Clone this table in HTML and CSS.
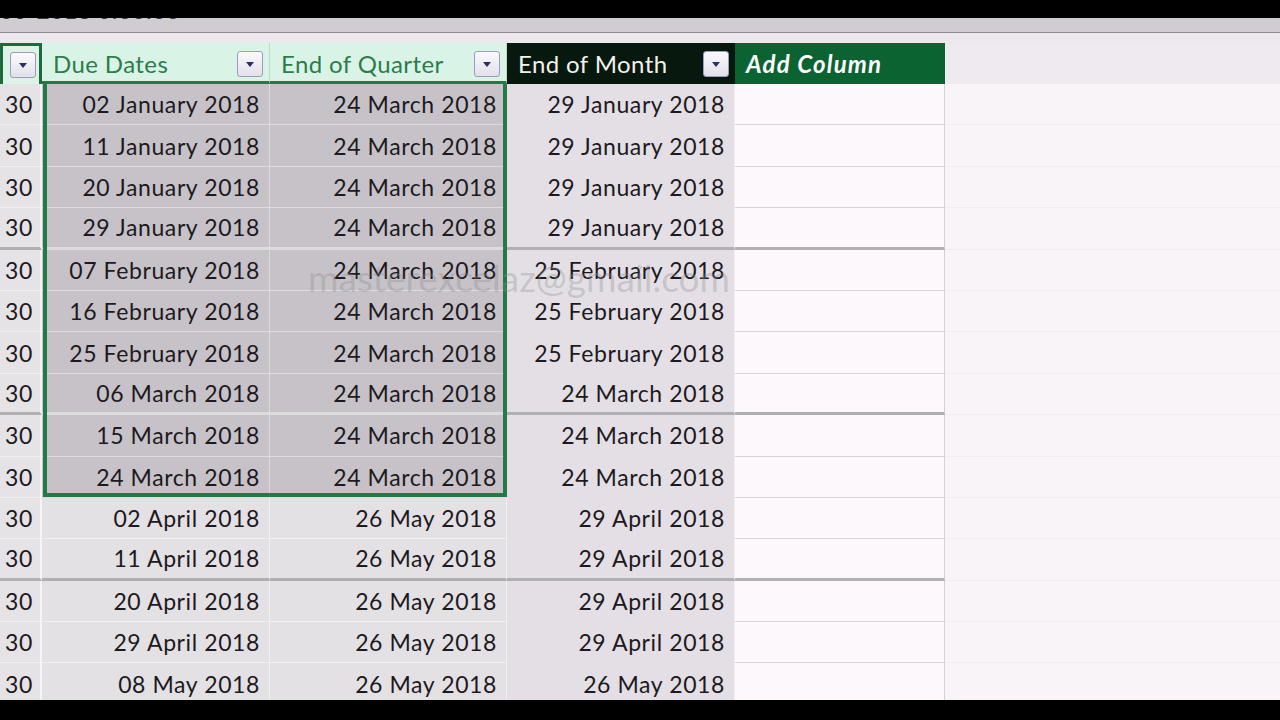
FILE: index.html
```html
<!DOCTYPE html>
<html>
    <head>
        <title>Due Dates</title>
        <link rel="stylesheet" href="styles.css">
    </head>
    <body>
        <div class="topbar"></div>
        <div class="screen">
            <div class="formula"><span class="formula-text">03-2018 0:00:00</span></div>
            <div class="gap"></div>
            <div class="sheet">
                <div class="row head">
                    <div class="hcell first"><span class="drop"></span></div>
                    <div class="hcell mint">Due Dates<span class="drop"></span></div>
                    <div class="hcell mint">End of Quarter<span class="drop"></span></div>
                    <div class="hcell dark">End of Month<span class="drop"></span></div>
                    <div class="hcell add">Add Column</div>
                    <div class="hcell rest"></div>
                </div>
                <div id="rows"></div>
                <div class="selection"></div>
                <div class="watermark">masterexcelaz@gmail.com</div>
            </div>
        </div>
        <div class="bottombar"></div>

        <script>
            var data = [
                ["02 January 2018", "24 March 2018", "29 January 2018"],
                ["11 January 2018", "24 March 2018", "29 January 2018"],
                ["20 January 2018", "24 March 2018", "29 January 2018"],
                ["29 January 2018", "24 March 2018", "29 January 2018"],
                ["07 February 2018", "24 March 2018", "25 February 2018"],
                ["16 February 2018", "24 March 2018", "25 February 2018"],
                ["25 February 2018", "24 March 2018", "25 February 2018"],
                ["06 March 2018", "24 March 2018", "24 March 2018"],
                ["15 March 2018", "24 March 2018", "24 March 2018"],
                ["24 March 2018", "24 March 2018", "24 March 2018"],
                ["02 April 2018", "26 May 2018", "29 April 2018"],
                ["11 April 2018", "26 May 2018", "29 April 2018"],
                ["20 April 2018", "26 May 2018", "29 April 2018"],
                ["29 April 2018", "26 May 2018", "29 April 2018"],
                ["08 May 2018", "26 May 2018", "26 May 2018"]
            ];

            function show() {
                var html = "";
                for (var i = 0; i < data.length; i++) {
                    var cls = "row";
                    if (i < 10) cls += " picked";
                    if (i == 3 || i == 7 || i == 11) cls += " split";
                    html += '<div class="' + cls + '">' +
                        '<div class="cell num">30</div>' +
                        '<div class="cell date">' + data[i][0] + '</div>' +
                        '<div class="cell date">' + data[i][1] + '</div>' +
                        '<div class="cell month">' + data[i][2] + '</div>' +
                        '<div class="cell blank"></div>' +
                        '<div class="cell rest"></div>' +
                        '</div>';
                }
                document.getElementById("rows").innerHTML = html;
            }

            show();
        </script>
    </body>
</html>
```

FILE: styles.css
```css
body {
    margin: 0;
    background-color: #000;
    font-family: Lato, "Open Sans", sans-serif;
    color: #1c1a1e;
}
.topbar {
    height: 18px;
    background-color: #000;
}
.bottombar {
    height: 20px;
    background-color: #000;
}
.screen {
    height: 682px;
    overflow: hidden;
    background-color: #f8f4f8;
}
.formula {
    height: 14px;
    overflow: hidden;
    background-color: #d0ccd1;
    border-bottom: 1px solid #8d8b8f;
}
.formula-text {
    display: block;
    margin-top: -19px;
    font-size: 22px;
    line-height: 24px;
    font-weight: bold;
    color: #3a383c;
    letter-spacing: 1px;
}
.gap {
    height: 10px;
    background-color: #ece8ed;
}
.sheet {
    position: relative;
}
.row {
    display: grid;
    grid-template-columns: 42px 228px 237px 228px 210px 1fr;
    height: 41.4px;
}
.head {
    height: 41px;
}
.hcell {
    display: flex;
    align-items: center;
    padding-left: 11px;
    font-size: 24px;
    letter-spacing: 0.4px;
    box-sizing: border-box;
}
.hcell.first {
    background-color: #dcf3e7;
    border: 3px solid #1c6b3b;
    border-bottom-width: 0;
    padding-left: 7px;
}
.mint {
    background-color: #d9f4e6;
    color: #2c7c4c;
    border-right: 1px solid #b9dcc6;
    border-bottom: 3px solid #237a46;
    padding-top: 3px;
}
.dark {
    background-color: #07180f;
    color: #f2f2ea;
}
.add {
    background-color: #0b6331;
    color: #fff;
    font-weight: bold;
    font-style: italic;
    letter-spacing: 1.2px;
}
.hcell.rest {
    background-color: #efeaf0;
}
.drop {
    width: 24px;
    height: 24px;
    margin-left: auto;
    margin-right: 6px;
    border: 1px solid #9d9bbd;
    border-radius: 3px;
    background: linear-gradient(#fafafd, #e2e0ea);
    position: relative;
}
.first .drop {
    margin: 0;
}
.drop::after {
    content: "";
    position: absolute;
    left: 8px;
    top: 10px;
    border-left: 4px solid transparent;
    border-right: 4px solid transparent;
    border-top: 5px solid #2a2d66;
}
.cell {
    display: flex;
    align-items: center;
    justify-content: flex-end;
    padding-right: 9px;
    font-size: 23px;
    letter-spacing: 0.6px;
    box-sizing: border-box;
    border-bottom: 1px solid #f2eff3;
    border-right: 1px solid #f2eff3;
}
.cell.num {
    justify-content: flex-start;
    padding-left: 5px;
    background-color: #e6e3e7;
    border-right: 2px solid #f5f3f6;
}
.cell.date {
    background-color: #e4e1e5;
    color: #1c1a1e;
}
.picked .cell.date {
    background-color: #c6c2c7;
    border-color: #dedbdf;
}
.cell.month {
    background-color: #e3dfe4;
    border-bottom-color: #e3dfe4;
}
.cell.blank {
    background-color: #fcf8fc;
    border-bottom: 1px solid #d9d5da;
    border-right: 1px solid #d4d0d6;
}
.cell.rest {
    background-color: #f8f4f8;
    border-bottom: 1px solid #f0ecf1;
    border-right: 0;
}
.split .cell {
    border-bottom: 3px solid #b1afb3;
}
.split .cell.rest {
    border-bottom: 1px solid #f0ecf1;
}
.selection {
    position: absolute;
    left: 43px;
    top: 41px;
    width: 464px;
    height: 413px;
    border: 4px solid #237a46;
    border-top-width: 0;
    box-sizing: border-box;
}
.watermark {
    position: absolute;
    left: 308px;
    top: 212px;
    font-size: 37px;
    color: rgba(140, 138, 142, 0.32);
    pointer-events: none;
}
```
